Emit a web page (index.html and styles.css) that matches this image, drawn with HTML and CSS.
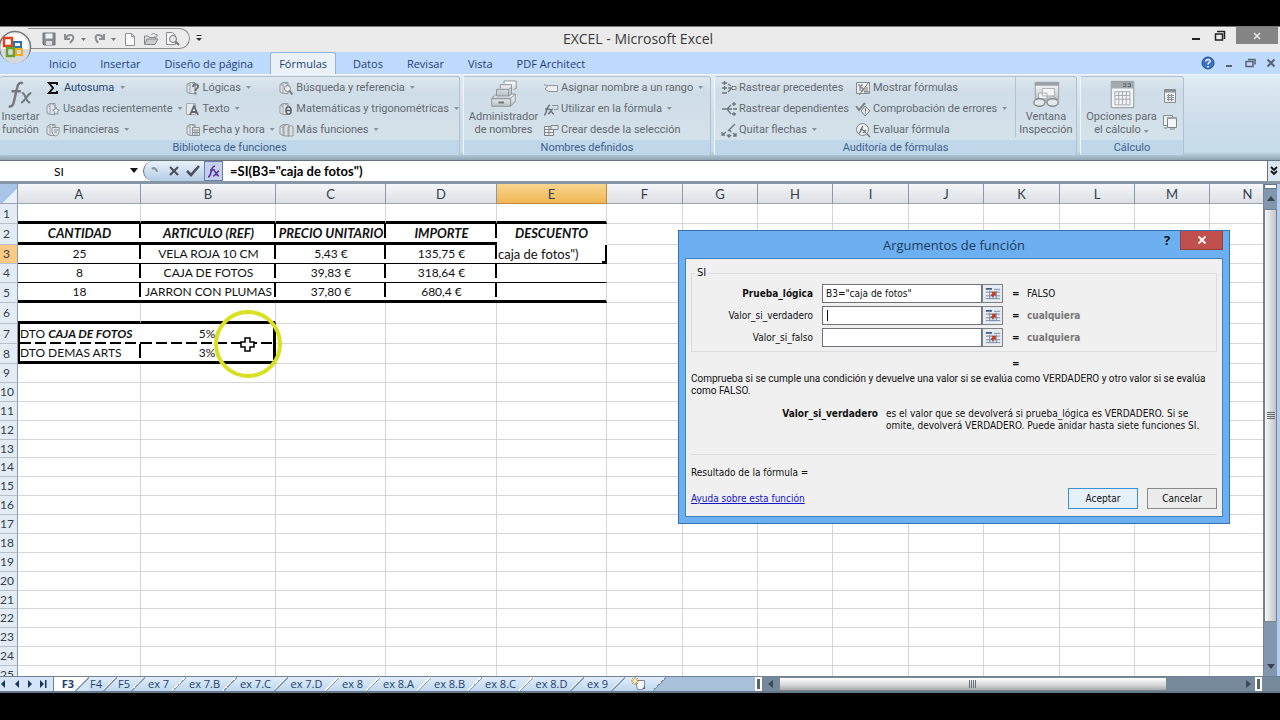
FILE: index.html
```html
<!DOCTYPE html>
<html lang="es">
<head>
<meta charset="utf-8">
<title>EXCEL - Microsoft Excel</title>
<link rel="stylesheet" href="styles.css">
</head>
<body>
<svg class="defs" aria-hidden="true">
  <defs>
    <g id="book"><path d="M2 4.500l3-2h5v11H5l-3-1.500z" fill="#dfe5ea" stroke="#8f989f"/><path d="M5 3v10.500M2.500 4.500l2.500 1M6 2.500l4 2v9" fill="none" stroke="#9aa3aa"/></g>
    <linearGradient id="silver" x1="0" y1="0" x2="0" y2="1"><stop offset="0" stop-color="#fff"/><stop offset="1" stop-color="#b9c0c6"/></linearGradient>
    <symbol id="i-pick" viewBox="0 0 16 14"><path d="M0 1h7v2H0z" fill="#3d5f86"/><path d="M9 2.500h7M0 5.500h16M0 9.500h16M0 12.500h16M4.500 4v9M11.500 4v9M8 9v4" stroke="#6f86a2" fill="none"/><path d="M6 5l5 0v5l-1.500-1.500L8 11 5.500 8.500 7.500 6.800z" fill="#c23a22"/></symbol>
  </defs>
</svg>
<div class="window">
  <header class="titlebar">
    <div class="qat">
      <button aria-label="Guardar"><svg viewBox="0 0 16 16"><path d="M2 2h12v12H3l-1-1z" fill="#8a8e92" stroke="#6c7074"/><path d="M4.500 2.500h7v5h-7z" fill="#f2f2f2"/><path d="M5 10h6v4H5z" fill="#dcdcdc"/></svg></button>
      <button class="wide" aria-label="Deshacer"><svg viewBox="0 0 25 16"><path d="M3 3v5h5M3.500 7.500C6 2.500 13 3 11 8.500L8 12" fill="none" stroke="#8b8f93" stroke-width="2"/><path d="M19 7h5l-2.500 3z" fill="#777"/></svg></button>
      <button class="wide" aria-label="Rehacer"><svg viewBox="0 0 25 16"><path d="M12 3v5H7M11.500 7.500C9 2.500 2 3 4 8.500L6 12" fill="none" stroke="#8b8f93" stroke-width="2"/><path d="M19 7h5l-2.500 3z" fill="#777"/></svg></button>
      <button aria-label="Nuevo"><svg viewBox="0 0 16 16"><path d="M3.500 2.500h6l3 3v9h-9z" fill="#fff" stroke="#8b8f93"/><path d="M9.500 2.500v3h3" fill="none" stroke="#8b8f93"/></svg></button>
      <button aria-label="Abrir"><svg viewBox="0 0 16 16"><path d="M1.500 13V5h4l1 1.500h6V8" fill="#ddd" stroke="#85898d"/><path d="M1.500 13.500L4 8h11l-3 5.500z" fill="#c9cbcd" stroke="#85898d"/><path d="M8 4c2-2 4-2 5 0l1-1v3h-3" fill="none" stroke="#909498"/></svg></button>
      <button aria-label="Vista preliminar"><svg viewBox="0 0 16 16"><path d="M2.500 1.500h6l3 3v9h-9z" fill="#f8f8f8" stroke="#8b8f93"/><circle cx="9" cy="8" r="3.500" fill="#e8e8e8" stroke="#777"/><path d="M11.500 10.500L15 14" stroke="#777" stroke-width="2"/></svg></button>
    </div>
    <button class="qat-more" aria-label="Personalizar"><svg viewBox="0 0 8 10"><path d="M1.500 2.500h5" stroke="#333"/><path d="M1 5h6L4 8z" fill="#333"/></svg></button>
    <h1>EXCEL - Microsoft Excel</h1>
    <div class="winbtns">
      <button aria-label="Minimizar"><svg viewBox="0 0 16 16"><path d="M4 11h8" stroke="#222" stroke-width="2"/></svg></button>
      <button aria-label="Restaurar"><svg viewBox="0 0 16 16"><path d="M3.500 6h7v6h-7zM5 3.500h7.500V11" fill="none" stroke="#222" stroke-width="1.500"/></svg></button>
      <button class="x" aria-label="Cerrar"><svg viewBox="0 0 16 16"><path d="M5 5l6 6M11 5l-6 6" stroke="#e8e8e8" stroke-width="1.600"/></svg></button>
    </div>
    <button class="orb" aria-label="Botón de Office"><svg viewBox="0 0 34 34"><circle cx="17" cy="17" r="15.500" fill="#eceef0" stroke="#777" stroke-width="1.500"/><circle cx="17" cy="17" r="13" fill="#fbfbfb"/><path d="M2.500 19a14.500 14.500 0 0 0 29 0z" fill="#d5d9dd"/><g fill="none" stroke-width="2.500"><path d="M6 8h8v8H6z" stroke="#d9471c"/><path d="M16 12h7v5h-7z" stroke="#2d72b8" stroke-width="2"/><path d="M9 18h7v8H9z" stroke="#6aa02c"/><path d="M18 19h6v6h-6z" stroke="#f0ad1d" stroke-width="2"/></g></svg></button>
  </header>

  <nav class="tabs">
    <button>Inicio</button><button>Insertar</button><button>Diseño de página</button><button class="on">Fórmulas</button><button>Datos</button><button>Revisar</button><button>Vista</button><button>PDF Architect</button>
    <div class="docbtns">
      <button aria-label="Ayuda"><svg viewBox="0 0 14 14"><circle cx="7" cy="7" r="6" fill="#3a74c4" stroke="#1e4c94"/><path d="M5 5.500c0-3 4.500-2.500 4 0-.3 1-2 1.300-2 3M7 10v1.500" fill="none" stroke="#fff" stroke-width="1.500"/></svg></button>
      <button aria-label="Minimizar libro"><svg viewBox="0 0 14 14"><path d="M4 10h6" stroke="#59636e" stroke-width="2"/></svg></button>
      <button aria-label="Restaurar libro"><svg viewBox="0 0 14 14"><path d="M3 5.500h7v5H3zM5 3.500h7v5" fill="none" stroke="#59636e" stroke-width="1.500"/></svg></button>
      <button aria-label="Cerrar libro"><svg viewBox="0 0 14 14"><path d="M3.500 3.500l7 7M10.500 3.500l-7 7" stroke="#59636e" stroke-width="2"/></svg></button>
    </div>
  </nav>

  <div class="ribbon">
    <section class="group g1">
      <div class="tools">
        <button class="big b1"><svg viewBox="0 0 32 32"><g fill="none" stroke="#72787e" stroke-width="2.600"><path d="M4 28c4 1 5-2 6-7l3-13c1-5 4-6 6-4M7 12h10"/><path d="M18 14c4-1 4 11 9 10M28 14c-4 0-7 10-11 10" stroke-width="2.200"/></g></svg><span>Insertar</span><span>función</span></button>
        <div class="col c1">
          <button class="live"><svg viewBox="0 0 16 16"><path d="M12 5V3H4l4 5-4 5h8v-2" fill="none" stroke="#111" stroke-width="2"/></svg>Autosuma<i></i></button>
          <button><svg viewBox="0 0 16 16"><use href="#book"/><path d="M11 6l1 2.500 2.500.5-2 1.500.5 3-2-1.500-2 1.500.5-3-2-1.500 2.500-.5z" fill="#edf0f2" stroke="#8f989f"/></svg>Usadas recientemente<i></i></button>
          <button><svg viewBox="0 0 16 16"><use href="#book"/><path d="M7 5.500h7v4c0 3-2 4-3.500 4.500C8.500 13 7 12 7 9.500z" fill="#dde2e6" stroke="#8a9299"/><path d="M9 8h4M9 10h3" stroke="#8a9299"/></svg>Financieras<i></i></button>
        </div>
        <div class="col c2">
          <button><svg viewBox="0 0 16 16"><use href="#book"/><path d="M8 7c0-4 6-3 5 0-.5 1.500-2.500 1.500-2.500 4M10.500 12.500v2" fill="none" stroke="#6f777e" stroke-width="2"/></svg>Lógicas<i></i></button>
          <button><svg viewBox="0 0 16 16"><path d="M1.500 2.500h9v11h-9z" fill="#e6eaed" stroke="#a3abb2"/><path d="M5 14l4-9 4 9M6.500 11h5" fill="none" stroke="#5f676e" stroke-width="1.800"/></svg>Texto<i></i></button>
          <button><svg viewBox="0 0 16 16"><use href="#book"/><path d="M7.500 5.500h7v8h-7zM7.500 8h7M10 8v5M12 8v5M8 10.500h6" fill="#e6e9ec" stroke="#8a9299"/></svg>Fecha y hora<i></i></button>
        </div>
        <div class="col c3">
          <button><svg viewBox="0 0 16 16"><use href="#book"/><circle cx="9.500" cy="8.500" r="3" fill="#eef1f3" stroke="#7d858c"/><path d="M11.500 11l3 3.500" stroke="#7d858c" stroke-width="2"/></svg>Búsqueda y referencia<i></i></button>
          <button><svg viewBox="0 0 16 16"><use href="#book"/><path d="M8 9.500c0-5 5-5 5 0s-5 5-5 0zM8 9.500h5" fill="#e6eaed" stroke="#5f676e" stroke-width="1.700"/></svg>Matemáticas y trigonométricas<i></i></button>
          <button><svg viewBox="0 0 16 16"><use href="#book"/><path d="M6 4l3-1.500 2 1V14H6zM10 5l3-1.500 2 1V14h-5z" fill="#dfe3e6" stroke="#8f989f"/></svg>Más funciones<i></i></button>
        </div>
      </div>
      <h2>Biblioteca de funciones</h2>
    </section>
    <section class="group g2">
      <div class="tools">
        <button class="big b2"><svg viewBox="0 0 32 32"><g fill="url(#silver)" stroke="#8a9299"><path d="M3 19l5-4h20l-4 5H3z"/><path d="M3 20h20v8H3zM23 20l5-5v8l-5 5"/><path d="M8 17v-7h13v7zM21 10l3-2v7l-3 2M12 9V5h12v8M16 4V1h13v8l-3 1"/></g><path d="M10 24h6" stroke="#777" stroke-width="2"/></svg><span>Administrador</span><span>de nombres</span></button>
        <div class="col c4">
          <button><svg viewBox="0 0 16 16"><path d="M1 4.500l4 1.500M5.500 5.500h9v6h-9L2 9z" fill="#eceff1" stroke="#8d959c"/></svg>Asignar nombre a un rango<i></i></button>
          <button><svg viewBox="0 0 16 16"><path d="M1 14c3 0 2-9 6-10M2 8h4M6 8c3 0 2 5 5 5M10 8c-2 0-3 5-5 5" fill="none" stroke="#6e767d" stroke-width="1.500"/><path d="M9 4.500h6v4h-4" fill="none" stroke="#8d959c"/></svg>Utilizar en la fórmula<i></i></button>
          <button><svg viewBox="0 0 16 16"><path d="M1.500 4.500h9v9h-9zM1.500 7.500h9M1.500 10.500h9M6 4.500v9" fill="#f0f2f4" stroke="#7d858c"/><path d="M8 3.500h7v4H8z" fill="#e4e8eb" stroke="#7d858c"/></svg>Crear desde la selección</button>
        </div>
      </div>
      <h2>Nombres definidos</h2>
    </section>
    <section class="group g3">
      <div class="tools">
        <div class="col c5">
          <button><svg viewBox="0 0 16 16"><path d="M1 3h5M3.500 1v4M1 8h5M3.500 6v4M1 13h5M7 4l3 2M7 12l3-3M7 8h4" fill="none" stroke="#6e767d" stroke-width="1.300"/><path d="M11 6.500h4v3h-4z" fill="#eee" stroke="#6e767d"/></svg>Rastrear precedentes</button>
          <button><svg viewBox="0 0 16 16"><path d="M1 8h5M6 8l4-4M6 8h5M6 8l4 5M11 3h4M13 1v4M12 8h4M11 13h4M13 11v4" fill="none" stroke="#6e767d" stroke-width="1.300"/></svg>Rastrear dependientes</button>
          <button><svg viewBox="0 0 16 16"><path d="M14 2L7 9M8 7l2 3M1 13l4-3M1 10v3h3M8 12v3M6 13l2 2 2-2M12 11l3 3M15 11v3h-3" fill="none" stroke="#6e767d" stroke-width="1.400"/></svg>Quitar flechas<i></i></button>
        </div>
        <div class="col c6">
          <button><svg viewBox="0 0 16 16"><path d="M1.500 2.500h13v11h-13z" fill="#eceff1" stroke="#858d94"/><path d="M3 5h2v6M8 5H6v3h2v3H6M14 2L4 15M10 8v4M12 7v5M9 12h5" fill="none" stroke="#6e767d"/></svg>Mostrar fórmulas</button>
          <button><svg viewBox="0 0 16 16"><path d="M1 5l3 4 6-7" fill="none" stroke="#7d858c" stroke-width="2"/><path d="M10 5l5 5-5 5-4-5z" fill="#dfe3e6" stroke="#7d858c"/><path d="M10.500 7.500v3M10.500 11.500v1" stroke="#666"/></svg>Comprobación de errores<i></i></button>
          <button><svg viewBox="0 0 16 16"><circle cx="7.500" cy="7.500" r="6" fill="#edf0f2" stroke="#7d858c"/><path d="M4 11c2 0 2-6 4-6.500M5 7.500h3M8 8l3 3M11 8l-3 3M12 12l3 3" fill="none" stroke="#6e767d" stroke-width="1.400"/></svg>Evaluar fórmula</button>
        </div>
        <button class="big b3"><svg viewBox="0 0 32 32"><path d="M4.500 2.500h25v19h-25z" fill="url(#silver)" stroke="#959da4"/><path d="M4 2h26v4H4z" fill="#9aa1a7"/><path d="M12 9h13v8H12zM8 14h9v6H8z" fill="#f4f6f7" stroke="#a4acb2"/><path d="M9 18l-3 3M25 18l3 3" stroke="#8a9299"/><ellipse cx="9" cy="24" rx="6" ry="4" fill="#e5e9ec" stroke="#858d94" stroke-width="1.500"/><ellipse cx="23" cy="24" rx="6" ry="4" fill="#e5e9ec" stroke="#858d94" stroke-width="1.500"/></svg><span>Ventana</span><span>Inspección</span></button>
      </div>
      <h2>Auditoría de fórmulas</h2>
    </section>
    <section class="group g4">
      <div class="tools">
        <button class="big b4"><svg viewBox="0 0 32 32"><path d="M4.500 1.500h24v28h-24z" fill="#f2f4f6" stroke="#8a9299"/><path d="M5 2h23v7H5z" fill="#a3aab0"/><path d="M17 4h3v3h-3M22 4h3v3h-3" fill="none" stroke="#596068"/><path d="M8.500 12.500h16v14h-16zM8.500 16.500h16M8.500 20.500h16M12.500 12v14M16.500 12v14M20.500 12v14" fill="none" stroke="#a0a7ad"/></svg><span>Opciones para</span><span>el cálculo<i></i></span></button>
        <div class="col c7">
          <button aria-label="Calcular ahora"><svg viewBox="0 0 16 16"><path d="M2.500 1.500h11v13h-11z" fill="#eef0f2" stroke="#858d94"/><path d="M3 2h10v2.500H3z" fill="#8d959c"/><path d="M5 7.500h7M5 9.500h7M5 11.500h7M6.500 6v7M9.500 6v7" stroke="#8d959c"/></svg></button>
          <button aria-label="Calcular hoja"><svg viewBox="0 0 16 16"><path d="M1.500 1.500h9v10h-9z" fill="#eef0f2" stroke="#858d94"/><path d="M5.500 3.500h9v10h-9z" fill="#f4f5f6" stroke="#7d858c"/><path d="M5 3h10v2H5z" fill="#9aa1a7"/><path d="M2 14h3M8 15h5" stroke="#7d858c"/></svg></button>
        </div>
      </div>
      <h2>Cálculo</h2>
    </section>
  </div>

  <div class="fbar">
    <label class="namebox"><input value="SI" aria-label="Cuadro de nombres"><svg viewBox="0 0 8 6"><path d="M0 0h8L4 5z" fill="#111"/></svg></label>
    <div class="fbtns">
      <svg viewBox="0 0 16 16"><path d="M5 6c2-2 5 0 5 3" fill="none" stroke="#8496a8" stroke-width="2"/></svg>
      <button aria-label="Cancelar"><svg viewBox="0 0 16 16"><path d="M4 4l8 8M12 4l-8 8" stroke="#4b5058" stroke-width="2"/></svg></button>
      <button aria-label="Introducir"><svg viewBox="0 0 16 16"><path d="M2 8l4 4 8-9" fill="none" stroke="#4b5058" stroke-width="2.600"/></svg></button>
      <button class="fx" aria-label="Insertar función"><svg viewBox="0 0 16 16"><path d="M2 14c4 0 2-11 7-11M4 7h5M8 8c2 0 2 5 5 5M13 8c-2 0-3 5-6 5" fill="none" stroke="#5b2fa0" stroke-width="1.700"/></svg></button>
    </div>
    <input class="formula" value='=SI(B3="caja de fotos")' aria-label="Barra de fórmulas">
    <button class="expand" aria-label="Expandir"><svg viewBox="0 0 10 12"><path d="M2 2l3 3 3-3M2 6l3 3 3-3" fill="none" stroke="#111" stroke-width="1.800"/></svg></button>
  </div>

  <main class="work">
    <div class="gridwrap">
      <table class="grid">
        <colgroup><col class="w-h"><col class="w-a"><col class="w-b"><col class="w-c"><col class="w-d"><col class="w-c"><col class="w-g"><col class="w-f"><col class="w-f"><col class="w-g"><col class="w-f"><col class="w-g"><col class="w-f"><col class="w-f"><col class="w-g"></colgroup>
        <thead><tr><th class="corner"></th><th>A</th><th>B</th><th>C</th><th>D</th><th class="sel">E</th><th>F</th><th>G</th><th>H</th><th>I</th><th>J</th><th>K</th><th>L</th><th>M</th><th>N</th></tr></thead>
        <tbody id="rows">
          <tr class="r20"><th>1</th><td class="tk"></td><td class="tk"></td><td class="tk"></td><td class="tk"></td><td class="tk"></td></tr>
          <tr class="r21 head"><th>2</th><td class="tk da">CANTIDAD</td><td class="tk da">ARTICULO (REF)</td><td class="tk da">PRECIO UNITARIO</td><td class="tk da">IMPORTE</td><td class="clear">DESCUENTO</td></tr>
          <tr class="r19"><th class="sel">3</th><td class="tn da">25</td><td class="tn da">VELA ROJA 10 CM</td><td class="tn da">5,43 €</td><td class="tn da">135,75 €</td><td class="tn edit">caja de fotos")</td></tr>
          <tr class="r19"><th>4</th><td class="tn da">8</td><td class="tn da">CAJA DE FOTOS</td><td class="tn da">39,83 €</td><td class="tn da">318,64 €</td><td class="tn"></td></tr>
          <tr class="r20"><th>5</th><td class="tk da">18</td><td class="tk da">JARRON CON PLUMAS</td><td class="tk da">37,80 €</td><td class="tk da">680,4 €</td><td class="tk"></td></tr>
          <tr class="r21"><th>6</th><td class="tk"></td><td class="tk"></td></tr>
          <tr class="r20"><th>7</th><td class="db lft bl clear-r">DTO <b>CAJA DE FOTOS</b></td><td class="db br">5%</td></tr>
          <tr class="r20"><th>8</th><td class="tk da lft bl">DTO DEMAS ARTS</td><td class="tk br">3%</td></tr>
        </tbody>
      </table>
    </div>
    <div class="vscroll">
      <span class="split"></span>
      <span class="arrow"><svg viewBox="0 0 8 6"><path d="M4 0l4 5H0z" fill="#39424e"/></svg></span>
      <span class="thumb"></span>
      <span class="rest"><svg viewBox="0 0 8 6"><path d="M4 5l4-5H0z" fill="#39424e"/></svg></span>
    </div>
  </main>

  <footer class="bottom">
    <div class="nav">
      <button aria-label="Primera"><svg viewBox="0 0 8 8"><path d="M5 0v8L1 4z"/></svg></button>
      <button aria-label="Anterior"><svg viewBox="0 0 8 8"><path d="M6 0v8L2 4z"/></svg></button>
      <button aria-label="Siguiente"><svg viewBox="0 0 8 8"><path d="M2 0v8l4-4z"/></svg></button>
      <button aria-label="Última"><svg viewBox="0 0 8 8"><path d="M1 0v8l4-4zM6 0h1.500v8H6z"/></svg></button>
    </div>
    <div class="sheets">
      <button class="on">F3</button><button class="s">F4</button><button class="s">F5</button><button class="m">ex 7</button><button class="l">ex 7.B</button><button class="l">ex 7.C</button><button class="l">ex 7.D</button><button class="m">ex 8</button><button class="l">ex 8.A</button><button class="l">ex 8.B</button><button class="l">ex 8.C</button><button class="l">ex 8.D</button><button class="m">ex 9</button><button class="m new" aria-label="Insertar hoja"><svg viewBox="0 0 16 14"><path d="M4.500 3.500h9v7l-2 2h-5z" fill="#f6f8fa" stroke="#7c8794"/><path d="M11 12l3-3v3z" fill="#56606c"/><path d="M4 0v8M0 4h8M1 1l6 6M7 1L1 7" stroke="#c28a2c"/><circle cx="4" cy="4" r="2" fill="#fff0b8"/></svg></button>
    </div>
    <div class="hscroll">
      <span class="cap"></span>
      <span class="ar"><svg viewBox="0 0 6 8"><path d="M5 0v8L0 4z" fill="#39485a"/></svg></span>
      <span class="hthumb"><svg viewBox="0 0 8 8"><path d="M.5 0v8M2.500 0v8M4.500 0v8M6.500 0v8" stroke="#6a6f75"/></svg></span>
      <span class="hrest"><svg viewBox="0 0 6 8"><path d="M1 0v8l5-4z" fill="#39485a"/></svg></span>
      <span class="cap"></span>
    </div>
  </footer>
</div>

<div class="dialog" role="dialog" aria-labelledby="dt">
  <div class="dtitle"><h2 id="dt">Argumentos de función</h2><button class="q" aria-label="Ayuda">?</button><button class="dx" aria-label="Cerrar"><svg viewBox="0 0 10 10"><path d="M1.500 1.500l7 7M8.500 1.500l-7 7" stroke="#fff" stroke-width="1.800"/></svg></button></div>
  <form class="dbody">
    <fieldset>
      <legend>SI</legend>
      <div class="args">
        <label class="bold" for="a1">Prueba_lógica</label><input id="a1" value='B3="caja de fotos"'><button type="button" aria-label="Contraer"><svg viewBox="0 0 16 14"><use href="#i-pick"/></svg></button><b>=</b><span>FALSO</span>
        <label for="a2">Valor_si_verdadero</label><input id="a2" class="caret"><button type="button" aria-label="Contraer"><svg viewBox="0 0 16 14"><use href="#i-pick"/></svg></button><b>=</b><span class="any">cualquiera</span>
        <label for="a3">Valor_si_falso</label><input id="a3"><button type="button" aria-label="Contraer"><svg viewBox="0 0 16 14"><use href="#i-pick"/></svg></button><b>=</b><span class="any">cualquiera</span>
      </div>
    </fieldset>
    <div class="eq">=</div>
    <p class="desc">Comprueba si se cumple una condición y devuelve una valor si se evalúa como VERDADERO y otro valor si se evalúa como FALSO.</p>
    <dl><dt>Valor_si_verdadero</dt><dd>es el valor que se devolverá si prueba_lógica es VERDADERO. Si se omite, devolverá VERDADERO. Puede anidar hasta siete funciones SI.</dd></dl>
    <p class="result">Resultado de la fórmula =</p>
    <div class="foot"><a href="#ayuda">Ayuda sobre esta función</a><button type="button" class="ok">Aceptar</button><button type="button">Cancelar</button></div>
  </form>
</div>

<svg class="pointer" viewBox="0 0 72 72" aria-hidden="true"><circle cx="36" cy="36" r="32" fill="none" stroke="#d9e021" stroke-width="4"/><path d="M33 30h5v4h4v5h-4v4h-5v-4h-4v-5h4z" fill="#fff" stroke="#000" stroke-width="1.500"/></svg>
<script src="grid.js"></script>
</body>
</html>
```

FILE: grid.js
```js
// Completes the sheet with empty cells up to column N and row 25.
const body = document.getElementById('rows');
const shortRows = [13, 21];
for (let n = 9; n <= 25; n++) {
  const tr = document.createElement('tr');
  tr.className = shortRows.includes(n) ? 'r18' : 'r19';
  const th = document.createElement('th');
  th.textContent = n;
  tr.append(th);
  body.append(tr);
}
for (const tr of body.rows) {
  while (tr.cells.length < 15) tr.insertCell();
}
```

FILE: styles.css
```css
* { box-sizing: border-box; }
body { margin: 0; background: #000; font-family: "Open Sans", "Noto Sans", sans-serif; font-size: 11px; color: #222; overflow: hidden; }
button { font: inherit; color: inherit; background: none; border: 0; padding: 0; display: flex; align-items: center; justify-content: center; white-space: nowrap; }
input { font: inherit; color: inherit; border: 0; padding: 0; min-width: 0; }
h1, h2, p, dl, dd { margin: 0; font-weight: normal; }
.defs { position: absolute; width: 0; height: 0; }
.window { height: 100vh; padding: 26px 0 27px; display: flex; flex-direction: column; }

/* Title bar */
.titlebar { position: relative; height: 26px; flex: none; display: flex; align-items: flex-start; background: #ebebeb; border-top: 1px solid #777; }
.qat { display: flex; align-items: center; gap: 5px; height: 21px; margin: 1px 0 0 28px; padding: 0 9px 0 13px; border: 1px solid #888; border-left: 0; border-radius: 0 11px 11px 0; }
.qat svg { width: 16px; height: 16px; display: block; }
.qat .wide svg { width: 25px; }
.qat-more { margin: 6px 0 0 5px; }
.qat-more svg { width: 8px; height: 10px; }
.titlebar h1 { position: absolute; left: 0; right: 4px; top: 2px; text-align: center; font-size: 14px; line-height: 20px; color: #3a3a3a; pointer-events: none; }
.winbtns { margin-left: auto; display: flex; gap: 8px; padding-right: 2px; }
.winbtns svg { width: 16px; height: 16px; }
.winbtns .x { width: 42px; height: 17px; background: #848484; }
.orb { position: absolute; left: -2px; top: 3px; z-index: 2; }
.orb svg { width: 34px; height: 34px; }

/* Ribbon tabs */
.tabs { height: 22px; flex: none; display: flex; align-items: stretch; padding-left: 37px; background: #bedaff; color: #1e4175; }
.tabs > button { padding: 0 12px; }
.tabs .on { padding: 0 8px; margin: 0 5px; background: #eaf2f8; border: 1px solid #94b6d8; border-bottom: 0; border-radius: 3px 3px 0 0; }
.docbtns { margin-left: auto; display: flex; align-items: center; gap: 7px; padding-right: 2px; }
.docbtns svg { width: 14px; height: 14px; display: block; }

/* Ribbon */
.ribbon { height: 86px; flex: none; display: flex; gap: 3px; padding: 1px 0 4px; background: linear-gradient(#e0ebf4, #cfdeea 50%, #c5dde8 90%, #8fa5b2); border-top: 1px solid #eef5fb; font-family: Roboto, sans-serif; }
.group { display: flex; flex-direction: column; border: 1px solid #adc1d2; border-left-color: #f1f6fa; border-radius: 3px; background: linear-gradient(#dde7ef, #cfdde8 20%, #d6e3ec); color: #62696f; overflow: hidden; }
.g1 { width: 460px; border-left: 0; }
.g2 { width: 248px; }
.g3 { width: 363px; }
.g4 { width: 104px; }
.group h2 { height: 15px; font-size: 11px; line-height: 15px; text-align: center; color: #3d5f8e; background: #c0d7ea; }
.tools { flex: 1; display: flex; align-items: flex-start; }
.col { display: flex; flex-direction: column; align-items: flex-start; }
.col button { height: 21px; gap: 2px; }
.col svg { width: 16px; height: 16px; flex: none; }
i { display: inline-block; width: 5px; height: 3px; margin-left: 3px; background: #8b939a; clip-path: polygon(0 0, 100% 0, 50% 100%); }
.col .live { color: #1e4175; gap: 3px; }
.big { flex-direction: column; justify-content: flex-start; padding-top: 3px; text-align: center; }
.big span { line-height: 13px; height: 13px; }
.big svg { width: 32px; height: 30px; }
.b1 { width: 45px; padding-right: 4px; }
.c1 { width: 140px; }
.c2 { width: 94px; }
.b2 { width: 79px; }
.c5 { width: 135px; padding-left: 6px; }
.c6 { width: 165px; padding-left: 5px; }
.b3 { flex: 1; height: 60px; border-left: 1px solid #b1c2d0; }
.b4 { width: 81px; }
.c7 { padding-top: 8px; gap: 5px; }

/* Formula bar */
.fbar { height: 24px; flex: none; display: flex; background: #fff; border-top: 1px solid #66747f; border-bottom: 3px solid #8797a5; font-family: Lato, sans-serif; font-size: 13px; color: #000; }
.namebox { width: 143px; display: flex; align-items: center; }
.namebox input { width: 118px; text-align: center; font-size: 12px; }
.namebox svg { width: 8px; height: 6px; margin-left: 12px; }
.fbtns { display: flex; align-items: center; gap: 3px; padding-left: 3px; width: 80px; background: linear-gradient(#e8f1fa, #b5cde6); border-left: 1px solid #65717d; border-radius: 10px 0 0 10px; }
.fbtns svg { width: 16px; height: 16px; display: block; }
.fx { align-self: stretch; width: 19px; border: 1px solid #6d7bb0; background: #c3d0ee; }
.formula { flex: 1; padding-left: 7px; font-weight: bold; background: none; }
.expand { width: 13px; background: #dce6f0; border-left: 1px solid #66747f; }
.expand svg { width: 10px; height: 12px; }

/* Sheet */
.work { flex: 1; min-height: 0; display: flex; background: #fff; }
.gridwrap { flex: 1; min-width: 0; overflow: hidden; }
.grid { width: 1285px; table-layout: fixed; border-collapse: separate; border-spacing: 0; font-family: Lato, sans-serif; font-size: 12px; line-height: 16px; color: #111; }
.w-h { width: 18px; } .w-a { width: 123px; } .w-b { width: 135px; } .w-c { width: 110px; } .w-d { width: 111px; } .w-f { width: 75px; } .w-g { width: 76px; }
.grid th, .grid td { padding: 0; text-align: center; white-space: nowrap; border-right: 1px solid #d3d5d8; border-bottom: 1px solid #d3d5d8; }
.grid th { font-weight: normal; color: #33404d; }
.grid thead th { height: 20px; font-size: 13px; background: linear-gradient(#f4f6f8, #dcdfe4); border-right-color: #8c98a4; border-bottom-color: #9aa5b0; }
.grid thead .corner { background: linear-gradient(135deg, #a9c4e9 60%, #e6effa 61%); }
.grid tbody th { padding-right: 4px; background: #e3ecf5; border-right-color: #8c98a4; border-bottom-color: #b4c0cc; }
.grid thead th.sel { background: linear-gradient(#f8d590, #efb753); border-color: #c48a3a; }
.grid tbody th.sel { background: #fbc983; }
.r18 > * { height: 18px; } .r19 > * { height: 19px; } .r20 > * { height: 20px; } .r21 > * { height: 21px; }
.grid .tk { border-bottom: 3px solid #000; }
.grid .tn { border-bottom: 1px solid #000; }
.grid .da { border-right: 0; background: repeating-linear-gradient(#000 0 14px, #fff 14px 18px) right / 2px 100% no-repeat; }
.grid .db { border-bottom: 0; background: repeating-linear-gradient(90deg, #000 0 11px, #fff 11px 15px) bottom / 100% 2px no-repeat; }
.grid .clear { border-bottom: 3px solid #fff; }
.grid .clear-r { border-right: 0; }
.grid .bl { border-left: 2px solid #000; }
.grid .br { border-right: 3px solid #000; }
.grid .lft { text-align: left; }
.head td, .grid b { font-weight: bold; font-style: italic; }
.head td, .grid .edit { font-size: 13px; }
.grid .edit { text-align: left; padding-left: 1px; border-right: 2px solid #000; background: linear-gradient(#000, #000) right bottom / 3px 2px no-repeat; }

.vscroll { width: 17px; display: flex; flex-direction: column; align-items: stretch; background: #8296ad; border-left: 1px solid #75869a; border-right: 3px solid #b5cdf0; }
.vscroll svg { width: 8px; height: 6px; }
.vscroll span { display: flex; justify-content: center; }
.split { height: 5px; background: #fff; border: 1px solid #66758a; }
.arrow { height: 20px; align-items: center; }
.thumb { height: 413px; align-items: center; border: 1px solid #76818d; background: repeating-linear-gradient(#666 0 1px, transparent 1px 2px) center / 8px 7px no-repeat, linear-gradient(90deg, #f6f6f6, #c2c5c9); }
.rest { flex: 1; align-items: flex-end; padding-bottom: 6px; }

/* Sheet tabs and horizontal scroll bar */
.bottom { height: 17px; flex: none; display: flex; background: #a9c0da; border-top: 1px solid #6f8295; border-bottom: 2px solid #66788c; color: #1f3f70; }
.nav { width: 54px; display: flex; justify-content: space-between; padding: 0 6px 0 0; background: #d5e5f7; border-right: 1px solid #6f8295; }
.nav svg { width: 8px; height: 8px; fill: #16345f; }
.sheets { display: flex; line-height: 14px; }
.sheets button { padding-right: 14px; background: linear-gradient(135deg, transparent 46%, #fff 46% 50%, #8398ae 50% 55%, transparent 55%) right / 14px 100% no-repeat, linear-gradient(#e0edfa, #bfd7ef); }
.sheets .on { width: 35px; padding-right: 7px; background: linear-gradient(135deg, #fff 50%, #8398ae 50% 55%, #d3e4f5 55%) right / 14px 100% no-repeat, #fff; font-weight: bold; }
.sheets svg { width: 16px; height: 14px; }
.sheets .new { background: linear-gradient(135deg, transparent 50%, #7b8fa5 50% 55%, #a9c0da 55%) right / 14px 100% no-repeat, linear-gradient(#e0edfa, #bfd7ef); }
.s { width: 28px; } .m { width: 41px; } .l { width: 51px; }
.hscroll { width: 41%; margin-left: auto; display: flex; align-items: stretch; padding-right: 18px; background: #75889c; }
.hscroll svg { width: 6px; height: 8px; }
.hscroll span { display: flex; align-items: center; justify-content: center; }
.cap { width: 7px; border: 2px solid #fff; background: #566; }
.ar { width: 17px; }
.hthumb { flex: 1; background: linear-gradient(#fff, #d4d5d7 60%, #a9abae); border: 1px solid #81888f; }
.hscroll .hthumb svg { width: 8px; }
.hscroll .hrest { width: 88px; justify-content: flex-end; padding-right: 4px; }

/* Function arguments window, floating over the sheet */
.dialog { position: absolute; left: 678px; top: 230px; width: 552px; padding: 0 6px 6px; background: #6cb0f2; border: 1px solid #3573b0; font-family: "DejaVu Sans Condensed", "DejaVu Sans", sans-serif; font-size: 10px; line-height: 12px; color: #111; }
.dialog, .dialog input, .dialog button { font-stretch: condensed; }
.dtitle { height: 27px; display: flex; align-items: flex-start; }
.dtitle h2 { flex: 1; padding: 4px 0 0 69px; text-align: center; font: 13px/20px "Open Sans", sans-serif; color: #1f3a5a; }
.dialog .q { width: 26px; height: 19px; font: bold 13px/19px "Open Sans", sans-serif; }
.dx { width: 43px; height: 19px; background: #c0504d; border: 1px solid #9a4140; border-top: 0; }
.dx svg { width: 10px; height: 10px; }
.dbody { background: #f0f0f0; border: 1px solid #3f7fba; padding: 8px 5px 7px; }
fieldset { margin: 0; padding: 5px 0 4px; border: 1px solid #dcdcdc; }
legend { margin-left: 3px; padding: 0 2px; font-size: 11px; line-height: 12px; }
.args { display: grid; grid-template-columns: 121px 160px 12px 6px 1fr; gap: 3px 9px; align-items: center; }
.args label { text-align: right; }
.bold, dt, .any { font-weight: bold; }
.args input { height: 19px; padding-left: 3px; border: 1px solid #6f7377; background: #fff; }
.args button { height: 19px; width: 21px; margin-left: -9px; border: 1px solid #7d8186; background: #e8ecf0; }
.args button svg { width: 16px; height: 13px; }
.args .caret { background: linear-gradient(#111, #111) 4px 3px / 1px 11px no-repeat, #fff; }
.any { color: #777; }
.eq { padding: 6px 0 3px 321px; font-weight: bold; }
.desc { font-family: Roboto, sans-serif; font-stretch: normal; }
dl { display: flex; gap: 8px; padding: 11px 0 22px; border-bottom: 1px solid #dcdcdc; }
dt { width: 187px; text-align: right; flex: none; }
.result { padding: 12px 0 9px; }
.foot { display: flex; gap: 9px; align-items: center; }
.foot a { margin-right: auto; color: #1414c8; }
.foot button { width: 70px; height: 21px; border: 1px solid #8a8a8a; background: #ececec; }
.foot .ok { border-color: #3c8fd0; background: #e6f0f8; }

.pointer { position: absolute; left: 212px; top: 308px; width: 72px; height: 72px; pointer-events: none; }
```
